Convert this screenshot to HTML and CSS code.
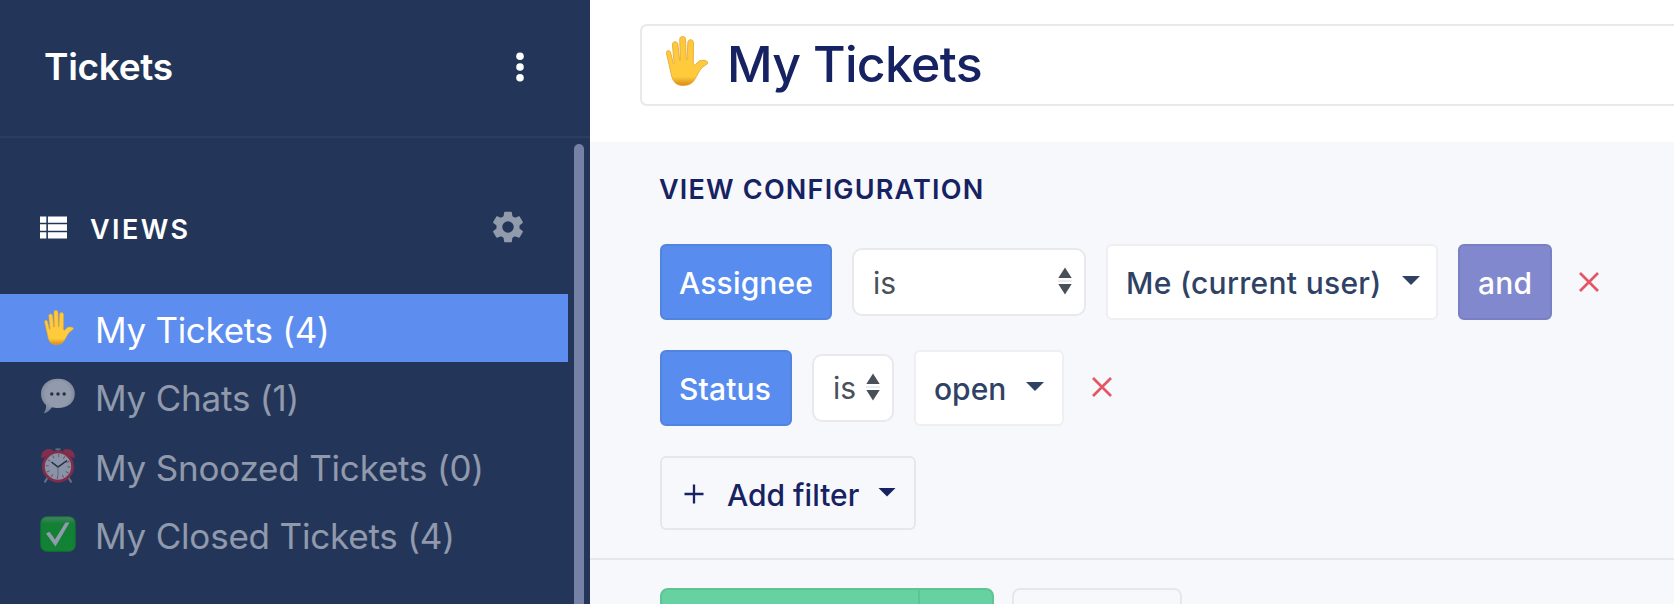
FILE: index.html
```html
<!DOCTYPE html>
<html lang="en">
<head>
<meta charset="utf-8">
<title>Tickets</title>
<link rel="stylesheet" href="styles.css">
</head>
<body>
<svg class="defs" aria-hidden="true">
  <defs>
    <linearGradient id="skin" x1="0" y1="0" x2="0" y2="1"><stop offset="0" stop-color="#ffc83c"/><stop offset=".82" stop-color="#ffcb3d"/><stop offset="1" stop-color="#d98a12"/></linearGradient>
    <linearGradient id="green" x1="0" y1="0" x2="0" y2="1"><stop offset="0" stop-color="#6fd178"/><stop offset=".2" stop-color="#04c814"/><stop offset="1" stop-color="#00d00c"/></linearGradient>
    <radialGradient id="bubble" cx=".5" cy=".45" r=".6"><stop offset=".6" stop-color="#fff"/><stop offset="1" stop-color="#c4c6ca"/></radialGradient>
    <symbol id="hand" viewBox="0 0 42 50">
      <path d="M4.5 35 .5 17.500C0 14 3.900 13.500 4.700 16.700L7.300 27.500 8.200 27.500 6.400 8.700C6.200 4.900 11.300 4.600 11.900 8.200L13.600 24.200 14.400 24.200 13.700 3.500C13.700-.9 19.500-.9 19.600 3.500L20.200 23.800 21 23.800 21.800 6.400C22.100 2.600 27.500 2.800 27.500 6.800L27.300 26.500C27.300 29 28.600 29.700 30 28L33.400 24.800C36.200 23.800 40 24.200 41.500 25.800 42.300 27.300 40.700 28.600 38.200 29.900 34.500 32 32.900 36.300 30.400 40.500 27.500 46.500 24.300 49.500 17 49.500 9 49.500 6 44.500 4.500 35Z" fill="url(#skin)" stroke="#e3a32b" stroke-width=".8"/>
    </symbol>
    <symbol id="cross" viewBox="0 0 20 20"><path d="M1 1 19 19M19 1 1 19" stroke="#e35664" stroke-width="2.700" fill="none"/></symbol>
    <symbol id="sort" viewBox="0 0 14 28"><path d="M7 .5 13.700 11H.3ZM.3 17H13.700L7 27.500Z" fill="#495057"/><path d="M0 14H14" stroke="#d8dadd" stroke-width="1"/></symbol>
  </defs>
</svg>
<div class="app">
  <aside class="sidebar">
    <header class="side-head">
      <h1 class="side-title">Tickets</h1>
      <svg class="dots" viewBox="0 0 8 30"><circle cx="4" cy="4.200" r="3.800"/><circle cx="4" cy="15" r="3.800"/><circle cx="4" cy="25.700" r="3.800"/></svg>
    </header>
    <div class="side-body">
      <nav class="views">
        <div class="views-head">
          <svg class="list-icon" viewBox="4 5 17 14"><path d="M4 14h4v-4H4zM4 19h4v-4H4zM4 9h4V5H4zM9 14h12v-4H9zM9 19h12v-4H9zM9 5v4h12V5z"/></svg>
          <h2 class="views-title">VIEWS</h2>
          <svg class="gear" viewBox="2 2 20 20"><path d="M19.140 12.940c.04-.3.060-.61.060-.94 0-.32-.02-.64-.07-.94l2.030-1.580c.18-.14.230-.41.120-.61l-1.920-3.320c-.12-.22-.37-.29-.59-.22l-2.390.96c-.5-.38-1.030-.7-1.620-.94l-.36-2.540c-.04-.24-.24-.41-.48-.41h-3.840c-.24 0-.43.170-.47.410l-.36 2.540c-.59.240-1.130.570-1.620.94l-2.390-.96c-.22-.08-.47 0-.59.220L2.740 8.870c-.12.210-.08.470.12.610l2.030 1.580c-.05.300-.09.630-.09.940s.02.640.070.94l-2.030 1.580c-.18.140-.23.410-.12.610l1.920 3.320c.12.220.370.290.590.220l2.390-.96c.5.380 1.030.7 1.620.94l.36 2.540c.05.240.240.410.480.410h3.840c.24 0 .44-.17.470-.41l.36-2.540c.59-.24 1.130-.56 1.620-.94l2.390.96c.22.080.470 0 .59-.22l1.920-3.320c.12-.22.070-.47-.12-.61zM12 15.600A3.600 3.600 0 1 1 12 8.400a3.600 3.600 0 0 1 0 7.200z"/></svg>
        </div>
        <ul class="view-list">
          <li class="view active"><svg class="emoji hand-small"><use href="#hand"/></svg><span>My Tickets (4)</span></li>
          <li class="view"><svg class="emoji" viewBox="0 0 36 36"><path d="M18 .7C28 .7 34.800 7 34.800 15.700S28 30 18 30C15.500 30 13.500 29.600 12 29.200 9.500 32.500 6.500 35 3.800 35.200 5.200 32.800 6.500 29.500 6 27 2.700 24 1 20.300 1 15.700 1 7 8 .7 18 .7Z" fill="url(#bubble)"/><g fill="#252a35"><circle cx="11.800" cy="16" r="1.700"/><circle cx="18" cy="16" r="1.700"/><circle cx="24.200" cy="16" r="1.700"/></g></svg><span>My Chats (1)</span></li>
          <li class="view snoozed"><svg class="emoji" viewBox="0 0 36 36"><path d="M8 29 4.500 34.500M28 29 31.500 34.500" stroke="#aaa" stroke-width="2.200"/><path d="M18 4V1M15.500 1.300H20.500" stroke="#999" stroke-width="2"/><path d="M1.500 10.500C-.3 4 7-1.500 13 2L12 5Z M34.500 10.500C36.300 4 29-1.500 23 2L24 5Z" fill="#e02840"/><circle cx="18" cy="18.500" r="14.600" fill="#eef0f4" stroke="#de2438" stroke-width="2.800"/><circle cx="18" cy="18.500" r="10.800" fill="none" stroke="#d85664" stroke-width="3.200" stroke-dasharray=".9 4.755"/><path d="M11.500 14 18 19 27 12.500" fill="none" stroke="#222" stroke-width="1.500"/><path d="M18 17V28" stroke="#888" stroke-width=".8"/></svg><span>My Snoozed Tickets (0)</span></li>
          <li class="view"><svg class="emoji" viewBox="0 0 36 36"><rect x=".8" y=".8" width="34.400" height="34.400" rx="6" fill="url(#green)" stroke="#04b012" stroke-width="1"/><path d="M6 17.500 9.500 15.800 15 23.500 25.500 6.500H29.500L15.500 30.500Z" fill="#fff"/></svg><span>My Closed Tickets (4)</span></li>
        </ul>
      </nav>
      <div class="scroll-thumb"></div>
    </div>
  </aside>
  <main class="main">
    <div class="title-bar">
      <div class="title-input"><svg class="hand-big"><use href="#hand"/></svg><span class="title-text">My Tickets</span></div>
    </div>
    <section class="config">
      <h2 class="config-title">VIEW CONFIGURATION</h2>
      <div class="filter">
        <span class="chip w-assignee">Assignee</span>
        <span class="select w-sel1"><span>is</span><svg class="sort"><use href="#sort"/></svg></span>
        <span class="drop w-me"><span class="me-text">Me (current user)</span><i class="caret"></i></span>
        <span class="chip purple w-and">and</span>
        <svg class="remove"><use href="#cross"/></svg>
      </div>
      <div class="filter">
        <span class="chip w-status">Status</span>
        <span class="select w-sel2"><span>is</span><svg class="sort"><use href="#sort"/></svg></span>
        <span class="drop w-open"><span>open</span><i class="caret"></i></span>
        <svg class="remove raised"><use href="#cross"/></svg>
      </div>
      <div class="add"><svg class="plus" viewBox="0 0 20 20"><path d="M10 .5V19.500M.5 10H19.500" stroke="#172262" stroke-width="2.300"/></svg><span>Add filter</span><i class="caret"></i></div>
    </section>
    <footer class="actions">
      <div class="save"><div class="save-main"></div><div class="save-more"></div></div>
      <div class="cancel"></div>
    </footer>
  </main>
</div>
</body>
</html>
```
FILE: styles.css
```css
* { box-sizing: border-box; }
body { margin: 0; overflow: hidden; font-family: Inter, "Liberation Sans", sans-serif; background: #f7f8fc; }
h1, h2, ul { margin: 0; padding: 0; }
svg { display: block; flex: none; }
.defs { position: absolute; width: 0; height: 0; }
.app { display: flex; width: 1674px; height: 604px; overflow: hidden; }

.sidebar { width: 590px; flex: none; background: #233659; color: #fff; display: flex; flex-direction: column; }
.side-head { height: 138px; flex: none; border-bottom: 2px solid #2c3e5f; display: flex; align-items: center; justify-content: space-between; padding: 0 66px 2px 44px; }
.side-title { font-size: 37px; font-weight: 600; line-height: 44px; letter-spacing: -.3px; }
.dots { width: 8px; height: 30px; fill: #fff; }
.side-body { display: flex; flex: 1; min-height: 0; padding: 6px 6px 0 0; justify-content: space-between; }
.views { width: 568px; }
.views-head { height: 150px; padding: 66px 44px 0 40px; display: flex; align-items: flex-start; }
.list-icon { width: 27px; height: 23px; margin-top: 6px; fill: #fff; }
.views-title { margin: 3px auto 0 23px; font-size: 27px; line-height: 34px; font-weight: 600; letter-spacing: 2.400px; }
.gear { width: 32px; height: 32px; margin-top: 1px; fill: #929bac; }
.view-list { list-style: none; }
.view { height: 68px; display: flex; align-items: center; gap: 19px; padding: 3px 0 0 40px; font-size: 35px; line-height: 42px; letter-spacing: -.2px; color: rgba(255, 255, 255, .5); white-space: nowrap; }
.view.active { background: #5d8dee; color: #fff; letter-spacing: -.3px; }
.view.snoozed { margin-top: 2px; }
.emoji { width: 36px; height: 36px; margin-top: -4px; opacity: .5; }
.emoji.hand-small { opacity: 1; height: 35px; width: 30px; margin-left: 4px; margin-right: 2px; }
.scroll-thumb { width: 10px; height: 480px; border-radius: 5px; background: #7682a5; }

.main { flex: 1; min-width: 0; }
.title-bar { height: 142px; background: #fff; padding: 24px 0 0 50px; }
.title-input { width: 1100px; height: 82px; border: 2px solid #e8e8ed; border-radius: 7px; display: flex; align-items: center; padding-left: 24px; }
.hand-big { width: 42px; height: 50px; margin-top: -8px; }
.title-text { margin: -2px 0 0 19px; font-size: 50px; line-height: 60px; font-weight: 500; letter-spacing: -.7px; color: #172262; white-space: nowrap; }
.config { height: 418px; padding: 31px 0 0 70px; border-bottom: 2px solid #e5e7eb; }
.config-title { margin-left: -1px; font-size: 27px; line-height: 34px; height: 71px; font-weight: 600; letter-spacing: 1.200px; color: #172262; }
.filter { display: flex; align-items: center; gap: 20px; height: 76px; margin-bottom: 30px; }
.chip, .drop { height: 76px; border-radius: 6px; border: 2px solid #5283de; background: #588def; color: #fff; font-size: 30px; line-height: 36px; font-weight: 500; display: flex; align-items: center; padding: 2px 0 0 17px; white-space: nowrap; }
.chip { letter-spacing: .15px; }
.chip.purple { background: #8188ce; border-color: #787fc4; padding-left: 18px; }
.drop { background: #fff; border-color: #efeff1; color: #2f4265; justify-content: space-between; padding: 2px 16px 0 18px; }
.me-text { letter-spacing: .3px; }
.caret { width: 18px; height: 9px; background: currentColor; clip-path: polygon(0 0, 100% 0, 50% 100%); margin-top: -5px; }
.select { height: 68px; border: 2px solid #e8e8ed; border-radius: 10px; background: #fff; color: #495057; font-size: 30px; line-height: 36px; display: flex; align-items: center; justify-content: space-between; padding: 0 12px 1px 19px; }
.w-sel1 span { padding-top: 3px; }
.sort { width: 14px; height: 28px; margin-top: -1px; }
.remove { width: 20px; height: 20px; margin-left: 7px; }
.remove.raised { margin-top: -3px; margin-left: 8px; }
.w-assignee { width: 172px; }
.w-sel1 { width: 234px; }
.w-me { width: 332px; }
.w-and { width: 94px; }
.w-status { width: 132px; }
.w-sel2 { width: 82px; }
.w-open { width: 150px; padding-right: 18px; }
.add { width: 256px; height: 74px; border: 2px solid #e5e7eb; border-radius: 6px; color: #172262; font-size: 30px; line-height: 36px; font-weight: 500; display: flex; align-items: center; padding: 3px 18px 0 22px; white-space: nowrap; }
.add span { margin: 0 auto 0 23px; }
.plus { width: 20px; height: 20px; margin-top: -1px; }
.actions { display: flex; gap: 18px; padding: 28px 0 0 70px; }
.save { display: flex; width: 334px; height: 76px; border: 2px solid #5fc493; border-radius: 8px; background: #67d2a1; }
.save-main { width: 258px; border-right: 2px solid #5fc493; }
.cancel { width: 170px; height: 76px; border: 2px solid #e5e7eb; border-radius: 8px; }
```
